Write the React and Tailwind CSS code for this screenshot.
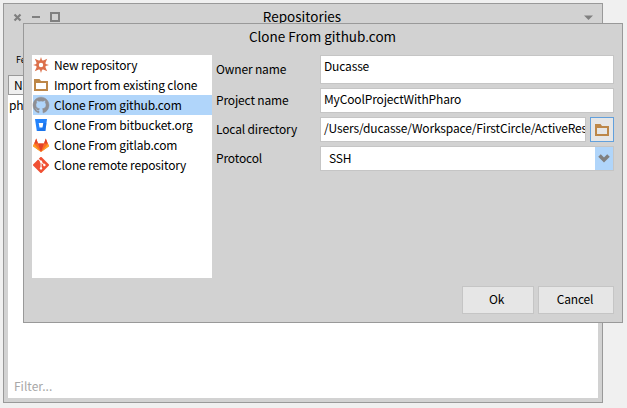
import React from 'react';
import { SiGithub, SiGit } from 'react-icons/si';

function Burst() {
  return (
    <svg width="16" height="16" viewBox="0 0 16 16" fill="none" stroke="#dc714b">
      <circle cx="8" cy="8" r="3.5" strokeWidth="2.6" />
      <path fill="#dc714b" stroke="none" d="M8 0l1.6 5H6.4zM8 16L6.4 11h3.2zM0 8L5 6.4v3.2zM16 8L11 9.6V6.4zM1.8 1.8l5 2.2-2.8 2.8zM14.2 1.8l-2.2 5-2.8-2.8zM1.8 14.2l2.2-5 2.8 2.8zM14.2 14.2l-5-2.2 2.8-2.8z" />
    </svg>
  );
}

function Folder() {
  return (
    <svg width="16" height="16" viewBox="0 0 16 16">
      <path fillRule="evenodd" fill="#bd8748" d="M1 2h5.5l1.5 2h7v10H1zM3 6v6h10V6z" />
    </svg>
  );
}

function Github() {
  return <SiGithub size={16} color="#8f8f93" stroke="#8f8f93" strokeWidth={0.8} className="overflow-visible" />;
}

function Bitbucket() {
  return (
    <svg width="16" height="16" viewBox="0 0 16 16">
      <path fill="#2483fb" fillRule="evenodd" d="M2 2h12L12.4 14H3.8zM5.7 6l.8 4.4h3.1l.7-4.4z" />
      <path fill="#1261d8" d="M10.3 6h3.2l-1.1 8H4l5.6-3.6z" opacity=".45" />
    </svg>
  );
}

function Gitlab() {
  return (
    <svg width="16" height="16" viewBox="0 0 16 16">
      <path fill="#fc6d26" d="M3.2 1.5L5 6.6h6l1.8-5.1L16 9.2 8 15 0 9.2z" />
      <path fill="#e24329" d="M3.2 1.5L5 6.6h6l1.8-5.1L14.6 6.6 11 6.6 8 15 5 6.6H1.4z" />
      <path fill="#fca326" d="M1 6.8L0 9.2 8 15zM15 6.8l1 2.4L8 15z" />
    </svg>
  );
}

function Git() {
  return <SiGit size={16} color="#f05033" />;
}

const sources = [
  ['New repository', Burst],
  ['Import from existing clone', Folder],
  ['Clone From github.com', Github],
  ['Clone From bitbucket.org', Bitbucket],
  ['Clone From gitlab.com', Gitlab],
  ['Clone remote repository', Git],
];

function SourceList() {
  return (
    <ul className="h-[223px] w-[180px] bg-white pl-px">
      {sources.map(([label, Icon], i) => (
        <li key={label} className={`flex h-5 items-center gap-[5px] ${i === 2 ? 'bg-[#b0d5fa]' : ''}`}>
          <Icon />
          <span>{label}</span>
        </li>
      ))}
    </ul>
  );
}

function Dialog() {
  return (
    <section className="absolute left-[23px] top-[23px] flex h-[300px] w-[600px] flex-col border border-[#999] bg-[#d2d2d2] pl-2 pr-2">
      <h2 className="h-[31px] pr-px pt-[2px] text-center text-[13.5px] leading-5 tracking-normal">Clone From github.com</h2>
      <div className="flex gap-1">
        <SourceList />
        <div className="flex w-[398px] flex-col gap-1">
          <div className="flex h-[29px]">
            <label className="w-[104px] pt-[4px]">Owner name</label>
            <div className="w-[294px] border border-[#c5c5c5] bg-white pl-[3px]">Ducasse</div>
          </div>
          <div className="flex h-[25px]">
            <label className="w-[104px] pt-[2px]">Project name</label>
            <div className="w-[294px] border border-[#c5c5c5] bg-white pl-[3px]">MyCoolProjectWithPharo</div>
          </div>
          <div className="flex h-[25px]">
            <label className="w-[104px] pt-[2px]">Local directory</label>
            <div className="w-[266px] overflow-hidden border border-[#c5c5c5] bg-white pl-[3px]">/Users/ducasse/Workspace/FirstCircle/ActiveRes</div>
            <button className="ml-1 flex w-6 items-center justify-center border border-[#62a0dc] bg-[#e6e6e6]"><Folder /></button>
          </div>
          <div className="flex h-[25px]">
            <label className="w-[104px] pt-[2px]">Protocol</label>
            <div className="flex w-[294px] border border-[#c5c5c5] bg-white pl-2">
              <span className="flex-1 pt-[1px]">SSH</span>
              <span className="flex w-[18px] items-center justify-center bg-[#b0d5fa]">
                <svg width="12" height="9" viewBox="0 0 12 9"><path d="M1.5 1.5L6 6l4.5-4.5" fill="none" stroke="#808080" strokeWidth="3.6" /></svg>
              </span>
            </div>
          </div>
        </div>
      </div>
      <footer className="flex justify-end gap-1 pt-2">
        <button className="h-7 w-[72px] border border-[#c5c5c5] bg-[#e6e6e6] pb-[2px] pr-[3px]">Ok</button>
        <button className="h-7 w-[76px] border border-[#c5c5c5] bg-[#e6e6e6] pb-[2px] pr-[2px]">Cancel</button>
      </footer>
    </section>
  );
}

export default function App() {
  return (
    <main className="relative h-[408px] w-[627px] overflow-hidden whitespace-nowrap bg-[#f0f0f0] font-['Noto_Sans_CJK_SC',sans-serif] text-[12px] leading-5 tracking-[-0.15px] text-black">
      <section className="absolute left-[3px] top-[3px] flex h-[400px] w-[600px] flex-col border border-[#999] bg-[#d2d2d2] px-1 pb-1">
        <header className="flex h-[26px] items-center text-[#808080]">
          <div className="flex w-[60px] items-center gap-[10px] pl-[5px]">
            <svg width="9" height="9" viewBox="0 0 9 9"><path d="M1.5 1.5l6 6M7.5 1.5l-6 6" stroke="#808080" strokeWidth="2.2" /></svg>
            <span className="h-[2px] w-2 bg-[#808080]" />
            <span className="h-[10px] w-[10px] border-2 border-[#808080]" />
          </div>
          <h1 className="flex-1 pb-[2px] pr-[2px] text-center text-[13.5px] tracking-normal text-black">Repositories</h1>
          <div className="flex w-[60px] justify-end pr-[5px]">
            <svg width="9" height="5" viewBox="0 0 9 5"><path d="M0 .5h9L4.5 5z" fill="#808080" /></svg>
          </div>
        </header>
        <div className="h-[45px] pl-2 pt-[20px] text-[9px]">Fetch</div>
        <div className="h-5 w-[100px] border border-[#999] bg-[#efefef] pl-[5px] leading-[18px]">Name</div>
        <div className="flex flex-1 flex-col justify-between bg-white pl-px">
          <span>pharo</span>
          <span className="pb-[2px] pl-[5px] tracking-normal text-[#a8a8a8]">Filter...</span>
        </div>
      </section>
      <Dialog />
    </main>
  );
}
